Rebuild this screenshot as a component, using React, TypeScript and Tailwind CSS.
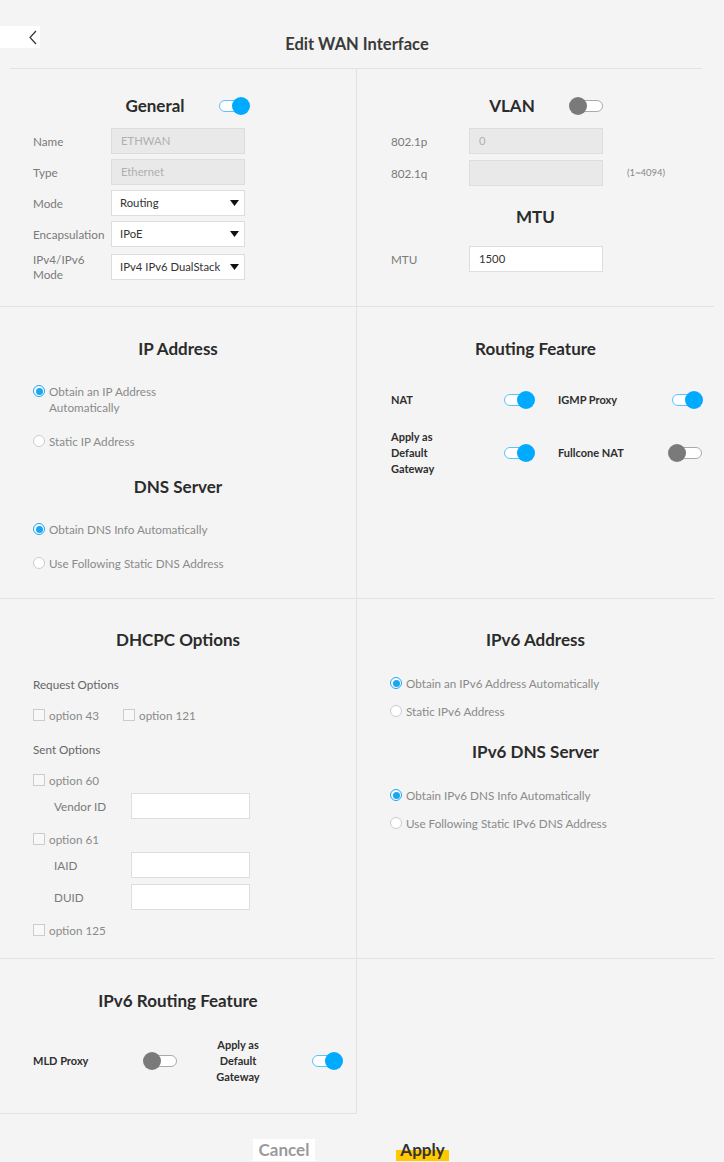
import { ReactNode } from "react";

const Toggle = ({ on }: { on: boolean }) => (
    <div className="relative w-[34px] h-[18px] shrink-0">
        {on ? (
            <>
                <span className="absolute left-0 top-[3px] w-[28px] h-[12px] rounded-full border border-[#58c3ff] bg-white" />
                <span className="absolute left-[13px] top-0 w-[18px] h-[18px] rounded-full bg-[#00aaff]" />
            </>
        ) : (
            <>
                <span className="absolute left-[5px] top-[3px] w-[29px] h-[12px] rounded-full border border-[#aaaaaa] bg-white" />
                <span className="absolute left-0 top-0 w-[18px] h-[18px] rounded-full bg-[#7a7a7a]" />
            </>
        )}
    </div>
);

const Radio = ({ checked, children, width }: { checked?: boolean; children: ReactNode; width?: string }) => (
    <div className="flex items-start gap-[4px]">
        <span className={`mt-[2px] w-[12px] h-[12px] rounded-full border bg-white flex items-center justify-center shrink-0 ${checked ? "border-[#18a7f2]" : "border-[#cccccc]"}`}>
            {checked && <span className="w-[7px] h-[7px] rounded-full bg-[#18a7f2]" />}
        </span>
        <span className={`text-[11.7px] leading-[16px] text-[#8a8a8a] ${width ?? ""}`}>{children}</span>
    </div>
);

const Check = ({ label }: { label: string }) => (
    <div className="flex items-center gap-[4px]">
        <span className="w-[12px] h-[12px] border border-[#cccccc] bg-[#f8f8f8] shrink-0" />
        <span className="text-[11.7px] leading-[16px] text-[#8a8a8a]">{label}</span>
    </div>
);

const Caret = () => (
    <svg width="9" height="6" viewBox="0 0 9 6" className="shrink-0">
        <polygon points="0,0 9,0 4.5,6" fill="#111" />
    </svg>
);

const Heading = ({ children }: { children: ReactNode }) => (
    <div className="text-center text-[17px] leading-[20px] font-bold text-[#2b2b2b]">{children}</div>
);

const Field = ({ label, children, labelWidth = "w-[78px]" }: { label: ReactNode; children: ReactNode; labelWidth?: string }) => (
    <div className="flex items-center">
        <div className={`${labelWidth} text-[11.7px] leading-[15px] text-[#7a7a7a] shrink-0`}>{label}</div>
        {children}
    </div>
);

const Disabled = ({ value }: { value: string }) => (
    <div className="w-[134px] h-[26px] border border-[#dddddd] bg-[#e9e9e9] px-[9px] flex items-center text-[11.3px] text-[#b0b0b0]">{value}</div>
);

const Select = ({ value }: { value: string }) => (
    <div className="w-[134px] h-[26px] border border-[#dddddd] bg-white pl-[8px] pr-[5px] flex items-center justify-between text-[11.3px] text-[#333]">
        <span>{value}</span>
        <Caret />
    </div>
);

const TextBox = ({ value = "", w = "w-[134px]" }: { value?: string; w?: string }) => (
    <div className={`${w} h-[26px] border border-[#dedede] bg-white px-[9px] flex items-center text-[11.3px] text-[#333]`}>{value}</div>
);

const HeadWithToggle = ({ title, on, spacer }: { title: string; on: boolean; spacer: string }) => (
    <div className="flex items-center justify-center">
        <span className={spacer} />
        <span className="text-[17px] leading-[20px] font-bold text-[#2b2b2b]">{title}</span>
        <span className="ml-[34px]">
            <Toggle on={on} />
        </span>
    </div>
);

const BoldLabel = ({ children, className = "" }: { children: ReactNode; className?: string }) => (
    <div className={`text-[11px] leading-[16px] font-bold text-[#2e2e2e] ${className}`}>{children}</div>
);

const App = () => {
    return (
        <div className="min-h-screen bg-[#f4f4f4] font-['Lato',sans-serif] relative">
            <div className="relative h-[68px] w-[714px]">
                <button className="absolute left-0 top-[26px] w-[40px] h-[22px] bg-white flex items-center justify-end pr-[3px]">
                    <svg width="8" height="15" viewBox="0 0 8 15">
                        <polyline points="7,1 1,7.5 7,14" fill="none" stroke="#333" strokeWidth="1.2" />
                    </svg>
                </button>
                <div className="pt-[34px] text-center text-[16.5px] leading-[20px] font-bold text-[#3a3a3a]">Edit WAN Interface</div>
            </div>

            <div className="w-[714px]">
                <div className="ml-[10px] w-[692px] border-t border-[#e2e2e2]" />

                {/* row 1 */}
                <div className="flex border-b border-[#e2e2e2] h-[238px]">
                    <div className="w-[357px] border-r border-[#e2e2e2] pt-[27px]">
                        <HeadWithToggle title="General" on spacer="w-[22px]" />
                        <div className="mt-[12px] pl-[33px] flex flex-col gap-[5px]">
                            <Field label="Name">
                                <Disabled value="ETHWAN" />
                            </Field>
                            <Field label="Type">
                                <Disabled value="Ethernet" />
                            </Field>
                            <Field label="Mode">
                                <Select value="Routing" />
                            </Field>
                            <Field label="Encapsulation">
                                <Select value="IPoE" />
                            </Field>
                            <Field label={<>IPv4/IPv6<br />Mode</>}>
                                <Select value="IPv4 IPv6 DualStack" />
                            </Field>
                        </div>
                    </div>
                    <div className="flex-1 pt-[27px]">
                        <HeadWithToggle title="VLAN" on={false} spacer="w-[21px]" />
                        <div className="mt-[12px] pl-[34px] flex flex-col gap-[6px]">
                            <Field label="802.1p">
                                <Disabled value="0" />
                            </Field>
                            <Field label="802.1q">
                                <Disabled value="" />
                                <span className="ml-[24px] text-[9.5px] text-[#888]">(1~4094)</span>
                            </Field>
                        </div>
                        <div className="mt-[21px]">
                            <Heading>MTU</Heading>
                        </div>
                        <div className="mt-[19px] pl-[34px]">
                            <Field label="MTU">
                                <TextBox value="1500" />
                            </Field>
                        </div>
                    </div>
                </div>

                {/* row 2 */}
                <div className="flex border-b border-[#e2e2e2] h-[292px]">
                    <div className="w-[357px] border-r border-[#e2e2e2] pt-[32px]">
                        <Heading>IP Address</Heading>
                        <div className="pl-[33px]">
                            <div className="mt-[24px]">
                                <Radio checked width="w-[125px]">Obtain an IP Address Automatically</Radio>
                            </div>
                            <div className="mt-[18px]">
                                <Radio>Static IP Address</Radio>
                            </div>
                        </div>
                        <div className="mt-[28px]">
                            <Heading>DNS Server</Heading>
                        </div>
                        <div className="pl-[33px]">
                            <div className="mt-[24px]">
                                <Radio checked>Obtain DNS Info Automatically</Radio>
                            </div>
                            <div className="mt-[18px]">
                                <Radio>Use Following Static DNS Address</Radio>
                            </div>
                        </div>
                    </div>
                    <div className="flex-1 pt-[32px]">
                        <Heading>Routing Feature</Heading>
                        <div className="pl-[34px] mt-[32px] flex items-center">
                            <div className="w-[167px] flex items-center">
                                <BoldLabel className="w-[113px]">NAT</BoldLabel>
                                <Toggle on />
                            </div>
                            <div className="flex items-center">
                                <BoldLabel className="w-[114px]">IGMP Proxy</BoldLabel>
                                <Toggle on />
                            </div>
                        </div>
                        <div className="pl-[34px] mt-[20px] flex items-center">
                            <div className="w-[167px] flex items-center">
                                <BoldLabel className="w-[113px]">Apply as<br />Default<br />Gateway</BoldLabel>
                                <Toggle on />
                            </div>
                            <div className="flex items-center">
                                <BoldLabel className="w-[110px]">Fullcone NAT</BoldLabel>
                                <Toggle on={false} />
                            </div>
                        </div>
                    </div>
                </div>

                {/* row 3 */}
                <div className="flex border-b border-[#e2e2e2] h-[360px]">
                    <div className="w-[357px] border-r border-[#e2e2e2] pt-[31px]">
                        <Heading>DHCPC Options</Heading>
                        <div className="pl-[33px]">
                            <div className="mt-[26px] text-[11.7px] leading-[16px] text-[#666]">Request Options</div>
                            <div className="mt-[15px] flex gap-[24px]">
                                <Check label="option 43" />
                                <Check label="option 121" />
                            </div>
                            <div className="mt-[18px] text-[11.7px] leading-[16px] text-[#666]">Sent Options</div>
                            <div className="mt-[15px]">
                                <Check label="option 60" />
                            </div>
                            <div className="mt-[5px] pl-[21px]">
                                <Field label="Vendor ID" labelWidth="w-[77px]">
                                    <TextBox w="w-[119px]" />
                                </Field>
                            </div>
                            <div className="mt-[12px]">
                                <Check label="option 61" />
                            </div>
                            <div className="mt-[5px] pl-[21px] flex flex-col gap-[6px]">
                                <Field label="IAID" labelWidth="w-[77px]">
                                    <TextBox w="w-[119px]" />
                                </Field>
                                <Field label="DUID" labelWidth="w-[77px]">
                                    <TextBox w="w-[119px]" />
                                </Field>
                            </div>
                            <div className="mt-[12px]">
                                <Check label="option 125" />
                            </div>
                        </div>
                    </div>
                    <div className="flex-1 pt-[31px]">
                        <Heading>IPv6 Address</Heading>
                        <div className="pl-[33px]">
                            <div className="mt-[25px]">
                                <Radio checked>Obtain an IPv6 Address Automatically</Radio>
                            </div>
                            <div className="mt-[12px]">
                                <Radio>Static IPv6 Address</Radio>
                            </div>
                        </div>
                        <div className="mt-[23px]">
                            <Heading>IPv6 DNS Server</Heading>
                        </div>
                        <div className="pl-[33px]">
                            <div className="mt-[25px]">
                                <Radio checked>Obtain IPv6 DNS Info Automatically</Radio>
                            </div>
                            <div className="mt-[12px]">
                                <Radio>Use Following Static IPv6 DNS Address</Radio>
                            </div>
                        </div>
                    </div>
                </div>

                {/* row 4 */}
                <div className="flex">
                    <div className="w-[357px] h-[155px] border-r border-b border-[#e2e2e2] pt-[32px]">
                        <Heading>IPv6 Routing Feature</Heading>
                        <div className="mt-[26px] pl-[33px] flex items-center">
                            <BoldLabel className="w-[110px]">MLD Proxy</BoldLabel>
                            <Toggle on={false} />
                            <BoldLabel className="w-[122px] text-center">Apply as<br />Default<br />Gateway</BoldLabel>
                            <span className="ml-[13px]">
                                <Toggle on />
                            </span>
                        </div>
                    </div>
                </div>
            </div>

            <div className="mt-[25px] pr-[22px] flex justify-center items-end gap-[81px]">
                <span className="w-[62px] bg-white text-center text-[17px] leading-[22px] font-bold text-[#9a9a9a]">Cancel</span>
                <span className="w-[53px] text-center text-[17px] leading-[22px] font-bold text-[#333] bg-[linear-gradient(transparent_50%,#ffc800_50%)]">Apply</span>
            </div>
        </div>
    );
};

export default App;
